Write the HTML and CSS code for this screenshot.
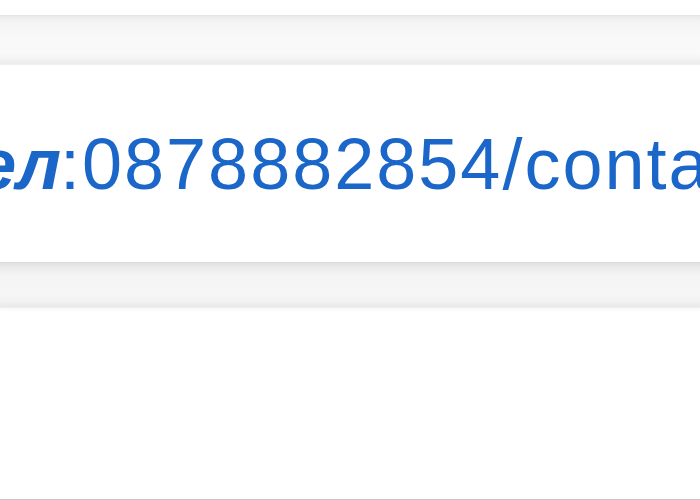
FILE: index.html
```html
<!DOCTYPE html>
<html lang="bg">
<head>
  <meta charset="UTF-8">
  <meta name="viewport" content="width=device-width, initial-scale=1.0">
  <title>Контакти</title>
  <link rel="stylesheet" href="styles.css">
</head>
<body>
  <div class="page">
    <div class="bar bar-top"></div>
    <div class="field">
      <p class="phone"><b>Тел</b>:0878882854/contact@mail.bg</p>
    </div>
    <div class="bar bar-bottom"></div>
    <div class="rule"></div>
  </div>
</body>
</html>
```

FILE: styles.css
```css
*{
  margin: 0;
  padding: 0;
  box-sizing: border-box;
}
body{
  background-color: #fff;
  font-family: "Liberation Sans", Arial, sans-serif;
}
.page{
  width: 700px;
  height: 500px;
  display: flex;
  flex-direction: column;
  overflow: hidden;
  padding-top: 15px;
}
.bar{
  flex: none;
  width: 100%;
}
/* верхняя полоса */
.bar-top{
  height: 50px;
  background: linear-gradient(to bottom,
    #e3e3e3 0px, #ececec 2px, #f3f3f3 6px, #f8f8f8 20px,
    #f9f9f9 38px, #f3f3f3 44px, #ececec 48px, #f1f1f1 50px);
}
.field{
  flex: none;
  height: 197px;
  display: flex;
  align-items: center;
  overflow: hidden;
  background-color: #fff;
}
.phone{
  margin-left: -64px;
  white-space: nowrap;
  font-size: 72px;
  letter-spacing: 2px;
  line-height: 1;
  color: #1b66c9;
}
.phone b{
  font-weight: bold;
  font-style: italic;
  letter-spacing: -1px;
}
/* нижняя полоса */
.bar-bottom{
  height: 46px;
  background: linear-gradient(to bottom,
    #dadada 0px, #e3e3e3 2px, #ececec 6px, #f4f4f4 14px,
    #f6f6f6 32px, #f1f1f1 40px, #eaeaea 44px, #efefef 46px);
  box-shadow: 0 2px 3px rgba(0,0,0,0.03);
}
.rule{
  margin-top: auto;
  height: 1px;
  background-color: #c6c6c6;
}
```
